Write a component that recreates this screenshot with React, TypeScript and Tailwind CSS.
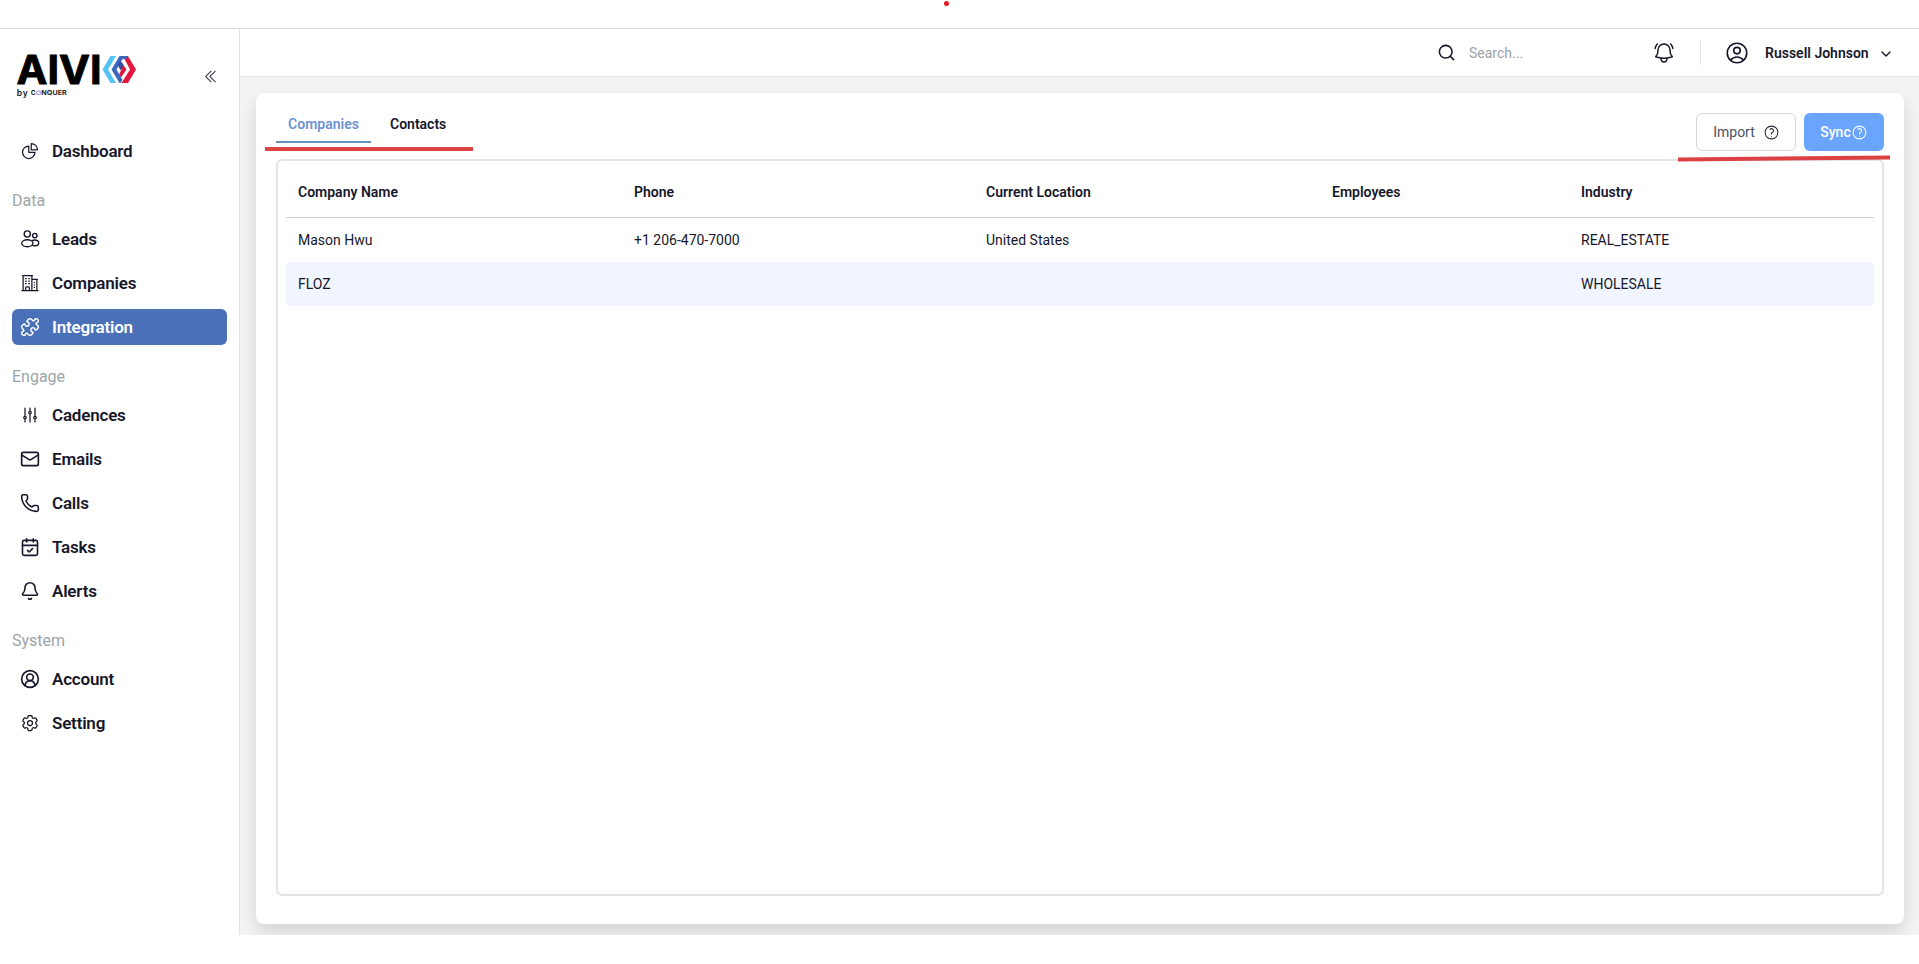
import React from "react";
import type { ReactNode } from "react";
import {
  HiOutlineChartPie,
  HiOutlineBuildingOffice2,
  HiOutlineAdjustmentsVertical,
  HiOutlineCog6Tooth,
  HiOutlineBellAlert,
  HiOutlineUserCircle,
  HiOutlineQuestionMarkCircle,
  HiChevronDoubleLeft,
} from "react-icons/hi2";
import { Bell, CalendarCheck, ChevronDown, CircleUserRound, Mail, Phone, Puzzle, Search } from "lucide-react";

function UsersIcon() {
  return (
    <svg width="20" height="20" viewBox="0 0 20 20" fill="none" stroke="currentColor" strokeWidth="1.4">
      <circle cx="7.3" cy="5" r="3.1" />
      <circle cx="14.8" cy="6.6" r="2.2" />
      <ellipse cx="7.3" cy="14.2" rx="5.6" ry="3.5" />
      <path d="M12 11.6c.8-.4 1.7-.6 2.7-.6 2.3 0 4 1.3 4 2.900s-1.800 2.800-4 2.800c-1 0-1.700-.1-2.400-.4" />
    </svg>
  );
}

function Logo() {
  return (
    <svg width="124" height="52" viewBox="0 0 124 52" className="overflow-visible" aria-label="AIVI by Conquer">
      <text x="-0.5" y="32" fontFamily="Inter, sans-serif" fontWeight="700" fontSize="40" textLength="85" lengthAdjust="spacingAndGlyphs" fill="#000" stroke="#000" strokeWidth="0.9">
        AIVI
      </text>
      <path d="M93.500 4h5.500l-8 13.500L99 31h-5.500l-8-13.500z" fill="#52c4f3" />
      <path d="M106 4h5l8 13.500-8 13.500h-6.500l8.500-13.500z" fill="#e3173e" />
      <path d="M104 9.500l5.500 8-5.500 8-2-3 2.500-5-2.500-5z" fill="#e3173e" />
      <path d="M102.500 4h8l-1.500 3.500-3.500-.5-6 10.500 6 10.500-2 3h-1l-8-13.500z" fill="#3b66bd" />
      <path d="M103 8l3.500 5-3 5.500-2.500-5z" fill="#3450a3" />
      <text x="-0.3" y="43.500" fontFamily="Inter, sans-serif" fontWeight="600" fontSize="8.500" textLength="11" fill="#111">by</text>
      <text x="13.800" y="43" fontFamily="Inter, sans-serif" fontWeight="700" fontSize="6.600" fill="#222">C</text>
      <circle cx="21.600" cy="40.700" r="1.900" fill="none" stroke="#a9a5dc" strokeWidth="1.200" />
      <text x="24.300" y="43" fontFamily="Inter, sans-serif" fontWeight="700" fontSize="6.600" textLength="25.500" lengthAdjust="spacingAndGlyphs" fill="#222">NQUER</text>
    </svg>
  );
}

function Item({ icon, label, active = false }: { icon: ReactNode; label: string; active?: boolean }) {
  return (
    <a
      className={
        active
          ? "flex h-9 items-center gap-3 rounded-md bg-[#4a70b7] px-2 text-white"
          : "flex h-9 items-center gap-3 rounded-md px-2 text-[#17172b]"
      }
    >
      <span className="flex size-5 items-center justify-center">{icon}</span>
      <span className="pt-[2px] text-[17px] font-semibold tracking-[-0.200px]">{label}</span>
    </a>
  );
}

function Section({ label }: { label: string }) {
  return <div className="flex h-9 items-center pt-[12px] text-base text-[#9ba5a9]">{label}</div>;
}

const grid = "grid grid-cols-[336px_352px_346px_249px_1fr] items-center [&>span]:pl-3";

export default function App() {
  return (
    <div className="h-[964px] overflow-hidden bg-white pt-7 font-['Roboto',sans-serif] text-[#17172b]">
      <div className="flex h-[907px] border-t border-[#dedfd0]">
        <aside className="w-60 shrink-0 border-r border-[#dfe1e3] px-3">
          <div className="flex h-[104px] items-start justify-between pt-[23px] pr-[8px] pl-[5px]">
            <Logo />
            <HiChevronDoubleLeft size={17} className="mt-4 text-[#3c3f47]" />
          </div>
          <nav className="flex flex-col gap-2">
            <Item icon={<HiOutlineChartPie size={20} />} label="Dashboard" />
            <Section label="Data" />
            <Item icon={<UsersIcon />} label="Leads" />
            <Item icon={<HiOutlineBuildingOffice2 size={20} />} label="Companies" />
            <Item icon={<Puzzle size={20} strokeWidth={1.8} />} label="Integration" active />
            <Section label="Engage" />
            <Item icon={<HiOutlineAdjustmentsVertical size={20} />} label="Cadences" />
            <Item icon={<Mail size={20} strokeWidth={2} />} label="Emails" />
            <Item icon={<Phone size={20} strokeWidth={1.9} />} label="Calls" />
            <Item icon={<CalendarCheck size={20} strokeWidth={1.9} />} label="Tasks" />
            <Item icon={<Bell size={20} strokeWidth={1.9} />} label="Alerts" />
            <Section label="System" />
            <Item icon={<CircleUserRound size={20} strokeWidth={2} />} label="Account" />
            <Item icon={<HiOutlineCog6Tooth size={20} />} label="Setting" />
          </nav>
        </aside>

        <div className="flex min-w-0 flex-1 flex-col">
          <header className="flex h-12 shrink-0 items-center border-b border-[#e2e4e6] pl-[1197px]">
            <Search size={19} strokeWidth={2} />
            <span className="ml-[13px] w-[183px] text-sm text-[#9ca0a8]">Search...</span>
            <HiOutlineBellAlert size={24} className="shrink-0" />
            <span className="ml-[24px] h-6 w-px bg-[#e2e4e6]" />
            <HiOutlineUserCircle size={26} className="ml-[23px] shrink-0" />
            <span className="ml-[15px] text-sm font-semibold whitespace-nowrap">Russell Johnson</span>
            <ChevronDown size={16} strokeWidth={2} className="mt-0.5 ml-[9px]" />
          </header>

          <main className="flex-1 overflow-hidden bg-[#f2f3f5] pt-4 pr-[15px] pb-[11px] pl-4">
            <section className="flex h-full flex-col rounded-lg bg-white px-5 pt-5 pb-7 shadow-[0_8px_16px_rgba(0,0,0,0.13)]">
              <div className="relative flex h-[46px] shrink-0 items-start justify-between">
                <div className="flex text-sm font-semibold">
                  <div className="flex h-[30px] w-[95px] justify-center border-b-2 border-[#6490bd] pt-px text-[#6c93d2]">Companies</div>
                  <div className="ml-[19px] pt-px">Contacts</div>
                </div>
                <div className="flex gap-2">
                  <button className="flex h-[38px] w-[100px] items-center justify-center gap-2 rounded-md border border-[#d4d6da] pl-px text-sm text-[#4b5060]">
                    Import
                    <HiOutlineQuestionMarkCircle size={17} className="text-[#252b38]" />
                  </button>
                  <button className="flex h-[38px] w-20 items-center justify-center rounded-md bg-[#69a4fe] text-sm font-medium text-white">
                    Sync
                    <HiOutlineQuestionMarkCircle size={17} />
                  </button>
                </div>
                <div className="absolute top-[34px] -left-[11px] h-1 w-[208px] bg-[#dc4345]" />
                <svg className="absolute top-[42px] -right-[7px]" width="214" height="7" viewBox="0 0 214 7">
                  <path d="M1 4.500L213 2.500" stroke="#dc4042" strokeWidth="4" />
                </svg>
              </div>

              <div className="flex-1 rounded-md border-2 border-[#e3e4e6] px-2">
                <div className={`${grid} h-[57px] border-b border-[#cfd1d3] pt-[6px] text-sm font-semibold`}>
                  <span>Company Name</span>
                  <span>Phone</span>
                  <span>Current Location</span>
                  <span>Employees</span>
                  <span>Industry</span>
                </div>
                <div className={`${grid} h-11 pb-px text-sm`}>
                  <span>Mason Hwu</span>
                  <span>+1 206-470-7000</span>
                  <span>United States</span>
                  <span />
                  <span>REAL_ESTATE</span>
                </div>
                <div className={`${grid} h-11 rounded-sm bg-[#f0f5ff] pb-px text-sm`}>
                  <span>FLOZ</span>
                  <span />
                  <span />
                  <span />
                  <span>WHOLESALE</span>
                </div>
              </div>
            </section>
          </main>
        </div>
      </div>
      <div className="absolute top-px left-[944px] h-[5px] w-[5px] rounded-full bg-[#e5171c]" />
    </div>
  );
}
